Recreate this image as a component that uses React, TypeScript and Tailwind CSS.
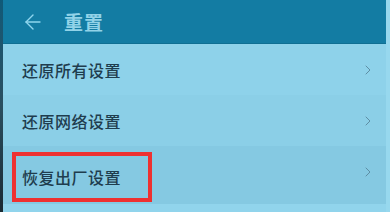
import React from 'react';
import { ArrowLeft, ChevronRight } from 'lucide-react';

const rows = [
  { label: '还原所有设置', bg: 'bg-[#8ed2ea]' },
  { label: '还原网络设置', bg: 'bg-[#8bcfe7]' },
  { label: '恢复出厂设置', bg: 'bg-[#85c9e2]', highlight: true },
];

const App: React.FC = () => {
  return (
    <div
      className="w-[390px] h-[212px] overflow-hidden flex bg-[#8fd3ea]"
      style={{ fontFamily: '"Noto Sans CJK SC", "Noto Sans", sans-serif' }}
    >
      {/* 左端の暗い縁 */}
      <div className="w-[3px] shrink-0 bg-gradient-to-b from-[#0f5a78] via-[#2a4f60] to-[#1a2a33]" />

      <div className="flex-1 flex flex-col min-w-0">
        <div className="h-[44px] shrink-0 bg-[#137ca3] flex items-center border-b border-[#0f6f93]">
          <ArrowLeft className="w-[24px] h-[24px] ml-[18px] text-[#8fd6ee]" strokeWidth={1.4} />
          <span className="ml-[19px] text-[19px] font-bold text-[#92d3e8] leading-none tracking-[1px]">
            重置
          </span>
        </div>

        {rows.map(row =>
          row.highlight ? (
            <div key={row.label} className={`h-[58px] shrink-0 flex items-start justify-between pt-[6px] ${row.bg}`}>
              <div className="ml-[9px] h-[50px] w-[140px] flex items-center pl-[6px] border-[4px] border-[#ee3131]">
                <span className="text-[16px] font-medium text-[#1f3d4e] leading-none tracking-[0.5px]">
                  {row.label}
                </span>
              </div>
              <ChevronRight className="w-[16px] h-[16px] mt-[12px] mr-[10px] text-[#5e8ea4]" strokeWidth={1.5} />
            </div>
          ) : (
            <div key={row.label} className={`h-[51px] shrink-0 flex items-center justify-between ${row.bg}`}>
              <div className="ml-[9px] h-[50px] w-[140px] flex items-center pl-[6px] border-[4px] border-transparent">
                <span className="text-[16px] font-medium text-[#1f3d4e] leading-none tracking-[0.5px]">
                  {row.label}
                </span>
              </div>
              <ChevronRight className="w-[16px] h-[16px] mr-[10px] text-[#5e8ea4]" strokeWidth={1.5} />
            </div>
          )
        )}

        <div className="flex-1 bg-[#91d4ec]" />
      </div>

      <div className="w-[4px] shrink-0 bg-[#97d8ee]" />
    </div>
  );
};

export default App;
